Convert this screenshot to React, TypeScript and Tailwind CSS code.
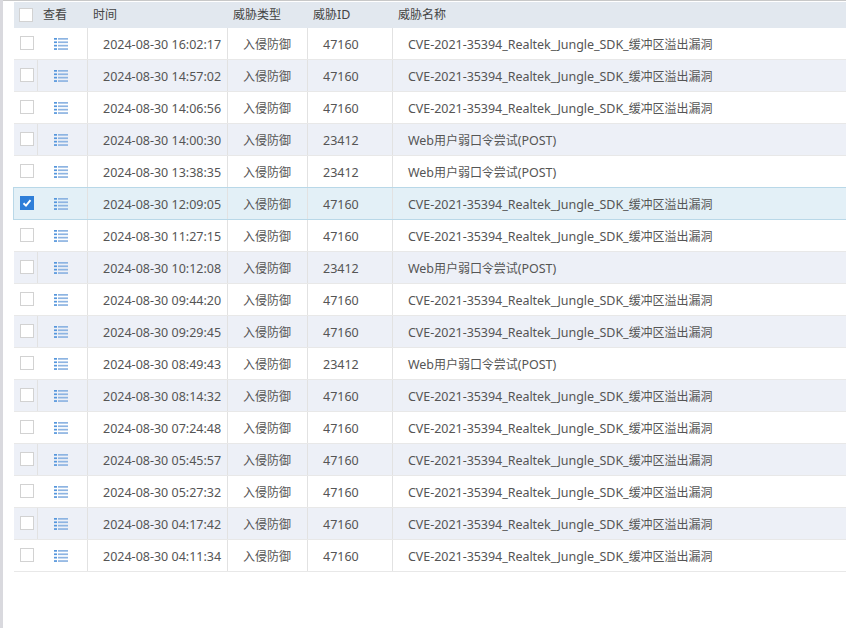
import React from 'react';

type Row = { time: string; id: string; name: string; selected?: boolean };

const CVE = 'CVE-2021-35394_Realtek_Jungle_SDK_缓冲区溢出漏洞';
const WEB = 'Web用户弱口令尝试(POST)';

const rows: Row[] = [
  { time: '2024-08-30 16:02:17', id: '47160', name: CVE },
  { time: '2024-08-30 14:57:02', id: '47160', name: CVE },
  { time: '2024-08-30 14:06:56', id: '47160', name: CVE },
  { time: '2024-08-30 14:00:30', id: '23412', name: WEB },
  { time: '2024-08-30 13:38:35', id: '23412', name: WEB },
  { time: '2024-08-30 12:09:05', id: '47160', name: CVE, selected: true },
  { time: '2024-08-30 11:27:15', id: '47160', name: CVE },
  { time: '2024-08-30 10:12:08', id: '23412', name: WEB },
  { time: '2024-08-30 09:44:20', id: '47160', name: CVE },
  { time: '2024-08-30 09:29:45', id: '47160', name: CVE },
  { time: '2024-08-30 08:49:43', id: '23412', name: WEB },
  { time: '2024-08-30 08:14:32', id: '47160', name: CVE },
  { time: '2024-08-30 07:24:48', id: '47160', name: CVE },
  { time: '2024-08-30 05:45:57', id: '47160', name: CVE },
  { time: '2024-08-30 05:27:32', id: '47160', name: CVE },
  { time: '2024-08-30 04:17:42', id: '47160', name: CVE },
  { time: '2024-08-30 04:11:34', id: '47160', name: CVE },
];

// CJK runs are 12px in the picture, latin runs a bit wider
const Txt = ({ text }: { text: string }) => (
  <>
    {text.split(/([\u4e00-\u9fff]+)/).map((part, i) =>
      i % 2 === 1 ? (
        <span key={i} className="text-[12px]">
          {part}
        </span>
      ) : (
        part
      ),
    )}
  </>
);

const ListIcon = () => (
  <svg width="14" height="12" viewBox="0 0 14 12" className="block">
    <g fill="#5596dc">
      <rect x="0" y="0" width="3" height="1.7" />
      <rect x="0" y="3.4" width="3" height="1.7" />
      <rect x="0" y="6.8" width="3" height="1.7" />
      <rect x="0" y="10.2" width="3" height="1.7" />
    </g>
    <g fill="#8db4e2">
      <rect x="4" y="0" width="10" height="1.7" />
      <rect x="4" y="3.4" width="10" height="1.7" />
      <rect x="4" y="6.8" width="10" height="1.7" />
      <rect x="4" y="10.2" width="10" height="1.7" />
    </g>
  </svg>
);

const Checkbox = ({ checked }: { checked?: boolean }) =>
  checked ? (
    <span className="flex h-[14px] w-[14px] items-center justify-center bg-[#2f7ed8]">
      <svg width="10" height="10" viewBox="0 0 10 10">
        <path d="M1.5 5.2 L4 7.6 L8.5 2.2" fill="none" stroke="#fff" strokeWidth="1.9" />
      </svg>
    </span>
  ) : (
    <span className="block h-[14px] w-[14px] border border-[#d2d2d2] bg-white" />
  );

export default function App() {
  return (
    <div className="h-[628px] w-[846px] overflow-hidden bg-white font-['Noto_Sans','Noto_Sans_CJK_SC',sans-serif] text-[12.5px] text-[#555]">
      <div className="flex h-full border-l-[3px] border-[#d9d9de]">
        <div className="ml-[11px] flex-1">
          <div className="-ml-[11px] h-[2px] border-t border-[#c8c8c8]" />
          {/* header */}
          <div className="flex h-[26px] items-center bg-[#e2e8ef] text-[#444]">
            <div className="w-[24px] pl-[5px]">
              <span className="block h-[14px] w-[14px] border border-[#d2d2d2] bg-white" />
            </div>
            <div className="w-[50px] pl-[5px]"><Txt text="查看" /></div>
            <div className="w-[140px] pl-[5px]"><Txt text="时间" /></div>
            <div className="w-[80px] pl-[5px]"><Txt text="威胁类型" /></div>
            <div className="w-[85px] pl-[5px]"><Txt text="威胁ID" /></div>
            <div className="pl-[5px]"><Txt text="威胁名称" /></div>
          </div>
          {/* rows */}
          {rows.map((row, i) => (
            <div
              key={row.time}
              className={
                row.selected
                  ? '-mt-px -ml-px flex h-[33px] items-center border border-r-0 border-[#b9d8e8] bg-[#e3f0f7]'
                  : i % 2 === 1
                    ? 'flex h-[32px] items-center border-b border-[#e8e8e8] bg-[#edf0f7]'
                    : 'flex h-[32px] items-center border-b border-[#e8e8e8] bg-white'
              }
            >
              <div
                className={
                  i % 2 === 1 && !row.selected
                    ? 'flex h-full w-[24px] items-center border-r border-[#e2e2e2] pb-px pl-[6px]'
                    : 'flex h-full w-[24px] items-center pb-px pl-[6px]'
                }
              >
                <Checkbox checked={row.selected} />
              </div>
              <div className="flex h-full w-[50px] items-center border-r border-[#e2e2e2] pl-[16px] pt-px">
                <ListIcon />
              </div>
              <div className="flex h-full w-[140px] items-center border-r border-[#e2e2e2] pl-[15px] pt-[3px]">{row.time}</div>
              <div className="flex h-full w-[80px] items-center border-r border-[#e2e2e2] pl-[15px] pt-[3px]"><Txt text="入侵防御" /></div>
              <div className="flex h-full w-[85px] items-center border-r border-[#e2e2e2] pl-[15px] pt-[3px]">{row.id}</div>
              <div className="pl-[15px] pt-[3px] tracking-[-0.04px]"><Txt text={row.name} /></div>
            </div>
          ))}
        </div>
      </div>
    </div>
  );
}
